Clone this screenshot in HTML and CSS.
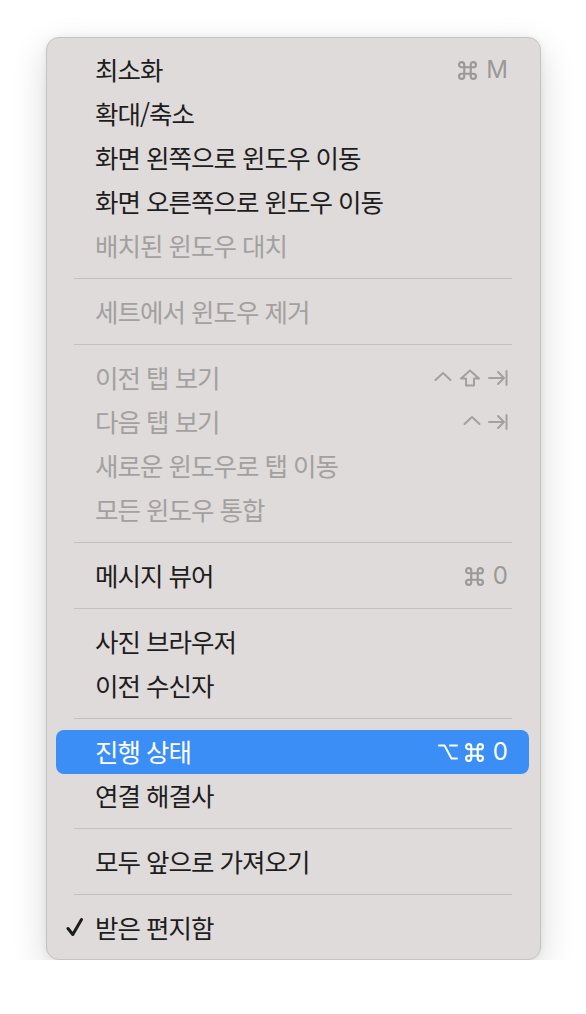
FILE: index.html
```html
<!DOCTYPE html>
<html lang="ko">
<head>
<meta charset="utf-8">
<link rel="stylesheet" href="styles.css">
</head>
<body>
<div class="menu">
  <div class="item"><span class="label">최소화</span><span class="keys"><svg class="k-cmd" viewBox="1.2 1.2 17.6 17.6"><path d="M7 7V4.6A2.4 2.4 0 1 0 4.6 7H15.4A2.4 2.4 0 1 0 13 4.6V15.4A2.4 2.4 0 1 0 15.4 13H4.6A2.4 2.4 0 1 0 7 15.4Z"/></svg><span class="ch">M</span></span></div>
  <div class="item"><span class="label">확대/축소</span></div>
  <div class="item"><span class="label">화면 왼쪽으로 윈도우 이동</span></div>
  <div class="item"><span class="label">화면 오른쪽으로 윈도우 이동</span></div>
  <div class="item disabled"><span class="label">배치된 윈도우 대치</span></div>
  <div class="sep"></div>
  <div class="item disabled"><span class="label">세트에서 윈도우 제거</span></div>
  <div class="sep"></div>
  <div class="item disabled"><span class="label">이전 탭 보기</span><span class="keys"><svg class="k-ctrl" viewBox="0 0 18 18"><path d="M1.5 11L9 4L16.5 11"/></svg><svg class="k-shift" viewBox="0 0 22 18"><path d="M11 1.5L20 9.5H15V16.5H7V9.5H2Z"/></svg><svg class="k-tab" viewBox="0 0 20 18"><path d="M1 9H16M10 3L16 9L10 15M18.5 2V16"/></svg></span></div>
  <div class="item disabled"><span class="label">다음 탭 보기</span><span class="keys"><svg class="k-ctrl" viewBox="0 0 18 18"><path d="M1.5 11L9 4L16.5 11"/></svg><svg class="k-tab" viewBox="0 0 20 18"><path d="M1 9H16M10 3L16 9L10 15M18.5 2V16"/></svg></span></div>
  <div class="item disabled"><span class="label">새로운 윈도우로 탭 이동</span></div>
  <div class="item disabled"><span class="label">모든 윈도우 통합</span></div>
  <div class="sep"></div>
  <div class="item"><span class="label">메시지 뷰어</span><span class="keys"><svg class="k-cmd" viewBox="1.2 1.2 17.6 17.6"><path d="M7 7V4.6A2.4 2.4 0 1 0 4.6 7H15.4A2.4 2.4 0 1 0 13 4.6V15.4A2.4 2.4 0 1 0 15.4 13H4.6A2.4 2.4 0 1 0 7 15.4Z"/></svg><span class="ch">0</span></span></div>
  <div class="sep"></div>
  <div class="item"><span class="label">사진 브라우저</span></div>
  <div class="item"><span class="label">이전 수신자</span></div>
  <div class="sep"></div>
  <div class="item active"><span class="label">진행 상태</span><span class="keys"><svg class="k-opt" viewBox="0 0 20 18"><path d="M1 2.5H6.5L13.5 15.5H19M12 2.5H19"/></svg><svg class="k-cmd" viewBox="1.2 1.2 17.6 17.6"><path d="M7 7V4.6A2.4 2.4 0 1 0 4.6 7H15.4A2.4 2.4 0 1 0 13 4.6V15.4A2.4 2.4 0 1 0 15.4 13H4.6A2.4 2.4 0 1 0 7 15.4Z"/></svg><span class="ch">0</span></span></div>
  <div class="item"><span class="label">연결 해결사</span></div>
  <div class="sep"></div>
  <div class="item"><span class="label">모두 앞으로 가져오기</span></div>
  <div class="sep"></div>
  <div class="item checked"><svg class="check" viewBox="0 0 18 20"><path d="M2 11.5L6.8 17.5L15.5 2.5"/></svg><span class="label">받은 편지함</span></div>
</div>
</body>
</html>
```

FILE: styles.css
```css
html, body {
  margin: 0;
  padding: 0;
  background: #ffffff;
}
body {
  padding: 37px 0 0 46px;
  font-family: "Noto Sans CJK KR", "Noto Sans", sans-serif;
}
.menu {
  box-sizing: border-box;
  width: 495px;
  height: 923px;
  background: #dfdbda;
  border: 1px solid #c6c2c1;
  border-radius: 13px;
  box-shadow: 0 12px 34px rgba(0, 0, 0, 0.16), 0 0 6px rgba(0, 0, 0, 0.06);
  padding: 10px 11px 9px 9px;
  display: flex;
  flex-direction: column;
}
.item {
  position: relative;
  height: 44px;
  display: flex;
  align-items: center;
  padding: 0 21px 0 39px;
  border-radius: 8px;
  color: #1e1d1d;
  font-size: 25.5px;
  letter-spacing: -1px;
}
.item.disabled {
  color: #a3a09f;
}
.item.active {
  background: #3b8ef6;
  color: #ffffff;
}
.label {
  flex: 1;
  white-space: nowrap;
  line-height: 1;
  padding-bottom: 2px;
}
.keys {
  display: flex;
  align-items: center;
  gap: 7px;
  color: #9b9897;
  letter-spacing: 0;
}
.item.disabled .keys {
  color: #a3a09f;
}
.item.active .keys {
  color: #ffffff;
}
.keys svg {
  fill: none;
  stroke: currentColor;
  stroke-width: 2;
  stroke-linecap: round;
  stroke-linejoin: round;
  display: block;
}
.k-cmd {
  width: 19px;
  height: 19px;
  stroke-width: 1.9;
}
.k-ctrl {
  width: 18px;
  height: 18px;
  stroke-width: 2.3;
}
.k-shift {
  width: 22px;
  height: 18px;
  stroke-width: 2;
}
.k-tab {
  width: 20px;
  height: 18px;
  stroke-width: 2.2;
}
.k-opt {
  width: 20px;
  height: 18px;
  stroke-width: 2.2;
}
.ch {
  font-family: "Inter", "Liberation Sans", sans-serif;
  font-size: 24px;
  line-height: 1;
  margin-left: 2px;
}
.check {
  position: absolute;
  left: 10px;
  top: 11px;
  width: 18px;
  height: 20px;
  fill: none;
  stroke: #1c1c1c;
  stroke-width: 3;
  stroke-linecap: round;
  stroke-linejoin: round;
}
.sep {
  height: 1px;
  margin: 10px 17px 11px 18px;
  background: #c5c1c0;
}
```
